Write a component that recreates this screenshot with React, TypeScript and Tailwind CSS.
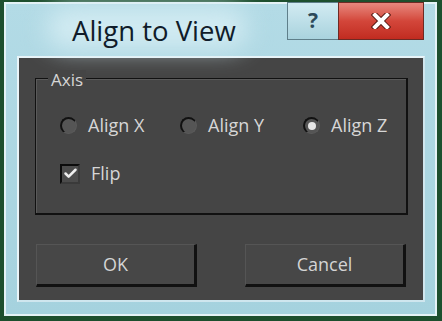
import { Check } from 'lucide-react';

function Radio({ label, checked, width }: { label: string; checked?: boolean; width: string }) {
  return (
    <div className={`${width} shrink-0 flex items-center gap-[11px]`}>
      <div className="w-[17px] h-[17px] rounded-full bg-[#555] border-l-[2px] border-t-[2px] border-[#111] border-r border-b border-r-[#5a5a5a] border-b-[#5a5a5a] flex items-center justify-center">
        {checked && <div className="w-[8px] h-[8px] rounded-full bg-[#e6e6e6]" />}
      </div>
      <span className="text-[18px] text-[#d6d6d6]">{label}</span>
    </div>
  );
}

function DlgButton({ label }: { label: string }) {
  return (
    <button className="w-[161px] h-[43px] bg-[#474747] border-t border-l border-[#555] border-r-[3px] border-b-[3px] border-r-[#111] border-b-[#111] text-[18px] text-[#d4d4d4]">
      {label}
    </button>
  );
}

export default function App() {
  return (
    <div
      className="w-[442px] h-[321px] bg-[#1d4f2e] pt-[2px] pl-[4px] pr-[5px] pb-[5px] overflow-hidden"
      style={{ fontFamily: '"Open Sans", "Liberation Sans", Arial, sans-serif' }}
    >
      <div className="w-full h-full border-[2px] border-[#e4f2f6] bg-gradient-to-b from-[#b3dbe6] to-[#a5d2de] flex flex-col pl-[11px] pr-[10px] pb-[12px]">
        {/* Title bar */}
        <div className="h-[52px] shrink-0 flex items-start relative">
          <div className="absolute left-[30px] top-[4px] w-[200px] h-[40px] rounded-full bg-[#d2ebf2] blur-[12px]" />
          <div className="relative pl-[55px] pt-[6px] text-[27.5px] text-[#101c2a]">
            Align to View
          </div>
          <div className="ml-auto -mt-[2px] mr-[1px] flex">
            <div className="w-[51px] h-[38px] bg-gradient-to-b from-[#d2ebf2] to-[#a9d3de] border border-[#5f7f8a] border-r-0 flex items-center justify-center text-[21px] font-bold text-[#2d4a5a]">
              ?
            </div>
            <div className="w-[86px] h-[38px] bg-gradient-to-b from-[#e7877e] via-[#d3463a] to-[#c12b20] border border-[#6d2a24] flex items-center justify-center">
              <svg width="20" height="16" viewBox="0 0 20 16">
                <path d="M4 2 L16 14 M16 2 L4 14" stroke="#5a1a14" strokeWidth="6" strokeLinecap="square" />
                <path d="M4 2 L16 14 M16 2 L4 14" stroke="#ffffff" strokeWidth="4" strokeLinecap="square" />
              </svg>
            </div>
          </div>
        </div>

        {/* Client area */}
        <div className="flex-1 bg-[#454545] border-[2px] border-[#e8f4f8] border-r-[#cfe6ee] border-b-[#cfe6ee] pl-[16px] pr-[15px] pt-[20px] flex flex-col">
          <div className="relative h-[137px] shrink-0 border border-[#111] border-r-[2px] border-b-[2px] shadow-[inset_1px_1px_0_#5a5a5a]">
            <span className="absolute -top-[9px] left-[12px] px-[3px] bg-[#454545] text-[17px] leading-[20px] text-[#d6d6d6]">
              Axis
            </span>
            <div className="pt-[33px] pl-[24px] flex">
              <Radio label="Align X" width="w-[120px]" />
              <Radio label="Align Y" width="w-[123px]" />
              <Radio label="Align Z" width="w-[100px]" checked />
            </div>
            <div className="mt-[21px] pl-[24px] flex items-center gap-[11px]">
              <div className="w-[20px] h-[20px] bg-[#4c4c4c] border-[2px] border-[#0c0c0c] border-r-[#3a3a3a] border-b-[#3a3a3a] flex items-center justify-center">
                <Check size={15} strokeWidth={4} className="text-[#eeeeee]" />
              </div>
              <span className="text-[18px] text-[#d6d6d6]">Flip</span>
            </div>
          </div>
          <div className="mt-[29px] flex justify-between pl-[1px] pr-[2px]">
            <DlgButton label="OK" />
            <DlgButton label="Cancel" />
          </div>
        </div>
      </div>
    </div>
  );
}
